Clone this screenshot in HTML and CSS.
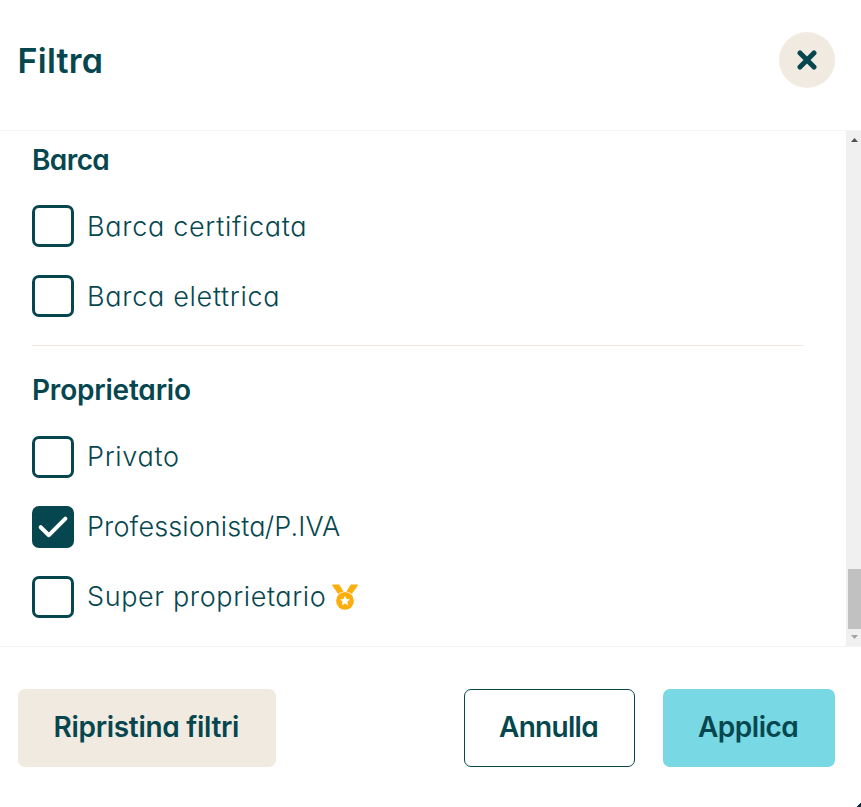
FILE: index.html
```html
<!DOCTYPE html>
<html lang="it">
<head>
  <meta charset="UTF-8">
  <title>Filtra</title>
  <meta name="viewport" content="width=device-width, initial-scale=1.0">
  <link rel="stylesheet" href="styles.css">
</head>
<body>
  <div class="modal">
    <header class="modal-header">
      <h1>Filtra</h1>
      <button class="close" aria-label="Chiudi">
        <svg width="20" height="20" viewBox="0 0 20 20">
          <path d="M3 3L17 17M17 3L3 17" />
        </svg>
      </button>
    </header>

    <div class="modal-body">
      <div class="filters">
        <section class="group boat">
          <h2>Barca</h2>
          <label class="option"><input type="checkbox"><span>Barca certificata</span></label>
          <label class="option"><input type="checkbox"><span>Barca elettrica</span></label>
        </section>
        <section class="group owner">
          <h2>Proprietario</h2>
          <label class="option"><input type="checkbox"><span>Privato</span></label>
          <label class="option">
            <input type="checkbox" checked>
            <svg class="tick" width="42" height="42" viewBox="0 0 42 42"><path d="M8.7 21.2L16.9 29.2L33.4 12.6" /></svg>
            <span class="pro">Professionista/P.IVA</span>
          </label>
          <label class="option">
            <input type="checkbox"><span class="super">Super proprietario</span>
            <svg class="medal" width="26" height="26" viewBox="0 0 26 26">
              <path d="M.8.5H7.2L11.6 7.6Q7.9 8.2 6.2 10.1L.2 1.4Q-.1.5.8.5ZM25.2.5H18.8L14.4 7.6Q18.1 8.2 19.8 10.1L25.8 1.4Q26.1.5 25.2.5Z" />
              <circle cx="13" cy="16.9" r="8.9" />
              <path class="star" d="M13 11.8L14.5 15L18 15.4L15.4 17.8L16.1 21.3L13 19.6L9.9 21.3L10.6 17.8L8 15.4L11.5 15Z" />
            </svg>
          </label>
        </section>
      </div>
      <div class="scrollbar">
        <svg width="15" height="17" viewBox="0 0 15 17"><path d="M5 11H12L8.5 7Z" fill="#505050" /></svg>
        <div class="thumb"></div>
        <svg width="15" height="17" viewBox="0 0 15 17"><path d="M5 6H12L8.5 10Z" fill="#a3a3a3" /></svg>
      </div>
    </div>

    <footer class="modal-footer">
      <button class="btn reset">Ripristina filtri</button>
      <button class="btn cancel">Annulla</button>
      <button class="btn apply">Applica</button>
    </footer>
  </div>
</body>
</html>
```

FILE: styles.css
```css
* {
  box-sizing: border-box;
}

body {
  margin: 0;
  font-family: Inter, 'Open Sans', sans-serif;
  font-feature-settings: "cv11"; /* single-storey a */
  color: #06474f;
  background: #fff;
}

.modal {
  position: relative;
  display: flex;
  flex-direction: column;
  height: 100vh;
  overflow: hidden;
  background: #fff;
}

/* Backdrop showing behind the rounded corner */
.modal::after {
  content: "";
  position: absolute;
  right: 0;
  bottom: 0;
  width: 4px;
  height: 4px;
  background: linear-gradient(135deg, transparent 50%, #0b2b3f 50%);
}

.modal-header {
  display: flex;
  justify-content: space-between;
  align-items: flex-start;
  height: 131px;
  padding: 32px 26px 0 17.5px;
  border-bottom: 1px solid #f6f4ee;
}

h1, h2 {
  margin: 0;
  font-weight: 600;
  white-space: nowrap;
}

h1 {
  font-size: 34px;
  line-height: 58px;
  letter-spacing: 0.25px;
}

h2 {
  font-size: 28px;
  line-height: 34px;
}

.close {
  display: flex;
  align-items: center;
  justify-content: center;
  width: 56px;
  height: 56px;
  padding: 0;
  border: none;
  border-radius: 50%;
  background: #f1eae0;
  cursor: pointer;
}

.close path {
  stroke: #06474f;
  stroke-width: 5;
  stroke-linecap: round;
}

.modal-body {
  display: flex;
  flex: 1;
  min-height: 0;
}

.filters {
  flex: 1;
  padding: 12px 42px 0 32px;
  overflow: hidden;
}

.boat h2 {
  letter-spacing: -0.6px;
}

.owner {
  margin-top: 28px;
  padding-top: 27px;
  border-top: 1px solid #f0e9e0;
}

.owner h2 {
  margin-bottom: 29px;
  letter-spacing: -0.2px;
}

.option {
  display: flex;
  align-items: center;
  position: relative;
  height: 42px;
  margin-top: 28px;
  font-size: 27px;
  font-weight: 300;
  letter-spacing: 0.7px;
  white-space: nowrap;
}

.owner h2 + .option {
  margin-top: 0;
}

.option span {
  padding-top: 1px;
  line-height: 42px;
}

.owner .option span {
  padding-top: 0;
}

.option .pro {
  letter-spacing: 0.13px;
}

.option .super {
  letter-spacing: 0.62px;
}

.option input {
  appearance: none;
  width: 42px;
  height: 42px;
  margin: 0 13px 0 0;
  border: 3px solid #06474f;
  border-radius: 7px;
  background: #fff;
}

.option input:checked {
  background: #06474f;
}

.tick {
  position: absolute;
  left: 0;
  top: 0;
}

.tick path {
  fill: none;
  stroke: #fff;
  stroke-width: 4;
  stroke-linecap: round;
  stroke-linejoin: round;
}

.medal {
  margin: 0 0 1px 6px;
  fill: #fcae0c;
}

.medal .star {
  fill: #fff;
}

.scrollbar {
  display: flex;
  flex-direction: column;
  width: 15px;
  background: #f0f0f0;
}

.thumb {
  height: 60px;
  margin: auto 0 0 2px;
  background: #c1c1c1;
}

.modal-footer {
  display: flex;
  height: 161px;
  padding: 42px 26px 0 18px;
  border-top: 1px solid #f6f4ee;
}

.btn {
  height: 78px;
  padding: 0 0 2px 35px;
  border: none;
  border-radius: 7px;
  font: 600 28px Inter, 'Open Sans', sans-serif;
  font-feature-settings: "cv11";
  color: #06474f;
  text-align: left;
  white-space: nowrap;
  cursor: pointer;
}

.reset {
  width: 258px;
  padding-left: 35.5px;
  background: #f1eae0;
  letter-spacing: -0.3px;
}

.cancel {
  width: 171px;
  margin-left: auto;
  padding-left: 34px;
  border: 1px solid #06474f;
  background: #fff;
  letter-spacing: -0.7px;
}

.apply {
  width: 172px;
  margin-left: 28px;
  background: #78d8e3;
  letter-spacing: -0.5px;
}
```
